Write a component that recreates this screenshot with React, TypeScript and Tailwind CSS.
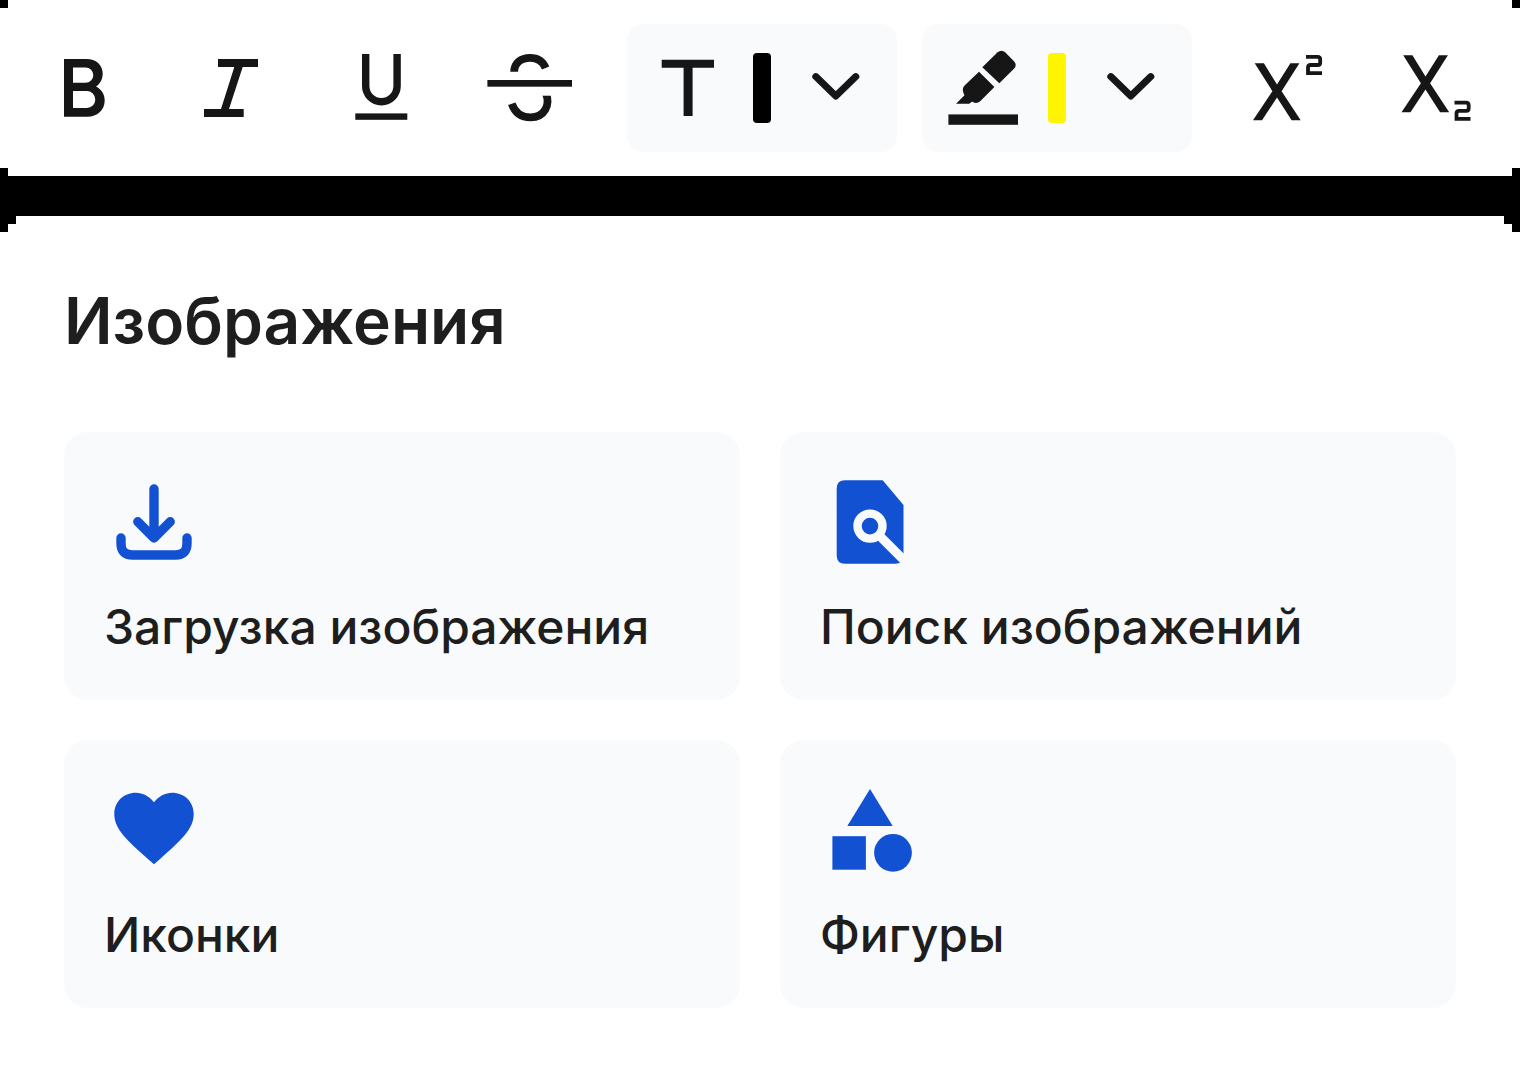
import type { ReactNode } from 'react';

function ToolIcon({ children }: { children: ReactNode }) {
  return (
    <svg viewBox="0 0 128 128" className="size-32" fill="currentColor" aria-hidden="true">
      {children}
    </svg>
  );
}

function ToolButton({ label, children }: { label: string; children: ReactNode }) {
  return (
    <button type="button" aria-label={label} className="size-32 shrink-0 rounded-2xl">
      <ToolIcon>{children}</ToolIcon>
    </button>
  );
}

function ColorButton({ label, swatch, children }: { label: string; swatch: string; children: ReactNode }) {
  return (
    <button type="button" aria-label={label} className="flex h-32 shrink-0 items-center rounded-2xl bg-[#f8fafc]">
      <svg viewBox="0 0 126 128" className="h-32 w-[126px]" fill="currentColor" aria-hidden="true">
        {children}
      </svg>
      <span className={`h-[70px] w-[18px] rounded-[4px] ${swatch}`} />
      <svg viewBox="0 0 126 128" className="h-32 w-[126px]" fill="none" stroke="currentColor" strokeWidth="7" strokeLinecap="round" strokeLinejoin="round" aria-hidden="true">
        <path d="M44.8 52.6 64.8 72 84.8 52.6" />
      </svg>
    </button>
  );
}

function SmallTwo() {
  return (
    <path
      d="M82 32.9H93.6Q96.2 32.9 96.2 35.5V38.4Q96.2 41 93.6 41H86.6Q84 41 84 43.6V49.1H98"
      fill="none"
      stroke="currentColor"
      strokeWidth="3.8"
    />
  );
}

function Cross() {
  return <path d="M30.7 39.3H39.9L53 60.5 66.4 39.3H75.4L57.6 67.2 76.7 96.3H67.6L53 73.5 38 96.3H29L48.4 67.2Z" />;
}

function CardButton({ label, children }: { label: string; children: ReactNode }) {
  return (
    <button type="button" className="flex flex-col items-start gap-[22px] rounded-3xl bg-[#f8fafc] p-10 text-left">
      <svg viewBox="0 0 100 100" className="size-[100px] text-[#1351d3]" fill="currentColor" aria-hidden="true">
        {children}
      </svg>
      <span className="text-5xl leading-[66px] font-medium">{label}</span>
    </button>
  );
}

export default function App() {
  return (
    <div className="flex min-h-screen flex-col gap-10 bg-black font-['Inter',sans-serif] text-[#1e1e1e]">
      <header
        role="toolbar"
        aria-label="Форматирование"
        className="flex items-center justify-between bg-white px-5 py-6 text-[#161616] [clip-path:polygon(8px_0,calc(100%-8px)_0,calc(100%-8px)_8px,100%_8px,100%_calc(100%-8px),calc(100%-8px)_calc(100%-8px),calc(100%-8px)_100%,8px_100%,8px_calc(100%-8px),0_calc(100%-8px),0_8px,8px_8px)]"
      >
        <div className="flex gap-[21px]">
          <ToolButton label="Полужирный">
            <path
              fillRule="evenodd"
              d="M44 35H66.5C76 35 82.7 41 82.7 49.6C82.7 55.5 80 60 76 62.6C81.3 65.2 84.7 70.3 84.7 76.5C84.7 86.5 77 92.7 67.5 92.7H44ZM53 43.6V58.8H65.7A7.6 7.6 0 0 0 65.7 43.6ZM53 67V84H66.8A8.5 8.5 0 0 0 66.8 67Z"
            />
          </ToolButton>
          <ToolButton label="Курсив">
            <path d="M49 35H89V43H73.7L60 85H74.7V93H35V85H52L65.3 43H49Z" />
          </ToolButton>
          <ToolButton label="Подчёркнутый">
            <path d="M47.7 30V62A15.7 15.7 0 0 0 79.1 62V30" fill="none" stroke="currentColor" strokeWidth="7.4" />
            <rect x="37.3" y="89.4" width="52" height="6.4" />
          </ToolButton>
          <ToolButton label="Зачёркнутый">
            <path
              d="M47.2 47.7C47.2 39 54 33.8 63 33.8C70.5 33.8 76 37.2 78.6 44M79 69.5C83.5 81 77.5 93.4 63.6 93.4C54.5 93.4 47.8 88.5 44.8 79.7"
              fill="none"
              stroke="currentColor"
              strokeWidth="7.8"
            />
            <rect x="72" y="64" width="16" height="7.7" className="fill-white" />
            <rect x="20.4" y="56" width="84.6" height="6.7" />
          </ToolButton>
        </div>
        <div className="flex gap-[25px]">
          <ColorButton label="Цвет текста" swatch="bg-black">
            <path d="M34.7 35.7H87V43.7H65.6V92H56.6V43.7H34.7Z" />
          </ColorButton>
          <ColorButton label="Цвет выделения" swatch="bg-[#fff500]">
            <path d="M60.3 43.3 75.6 28.2Q79.6 25 83.4 28.4L92.2 37.4Q95.2 41 92.2 44.6L77.3 59.3Z" />
            <path d="M57 47.7 72.4 63 58.2 77.2Q54.4 80.6 50.6 77.7L49.4 77.9 47.3 79.7H34L42.5 71.2C40.4 67.4 40.2 64.2 42.6 61.6Z" />
            <rect x="26.4" y="90.4" width="69.6" height="10.4" />
          </ColorButton>
        </div>
        <div className="flex gap-[21px]">
          <ToolButton label="Надстрочный">
            <g transform="translate(1 0)">
              <Cross />
              <SmallTwo />
            </g>
          </ToolButton>
          <ToolButton label="Подстрочный">
            <g transform="translate(0.5 -8)">
              <Cross />
            </g>
            <g transform="translate(0.5 45.8)">
              <SmallTwo />
            </g>
          </ToolButton>
        </div>
      </header>

      <main className="flex grow flex-col gap-[70px] bg-white p-16 [clip-path:polygon(16px_0,calc(100%-16px)_0,calc(100%-16px)_8px,calc(100%-8px)_8px,calc(100%-8px)_16px,100%_16px,100%_100%,0_100%,0_16px,8px_16px,8px_8px,16px_8px)]">
        <h1 className="text-[64px] leading-[82px] font-semibold">Изображения</h1>
        <div className="grid grid-cols-2 gap-10">
          <CardButton label="Загрузка изображения">
            <path
              d="M50 17V65M33.8 49.8 50 66 66.2 49.8M17 66V71.5Q17 83 28.5 83H71.5Q83 83 83 71.5V66"
              fill="none"
              stroke="currentColor"
              strokeWidth="9.4"
              strokeLinecap="round"
              strokeLinejoin="round"
            />
          </CardButton>
          <CardButton label="Поиск изображений">
            <path d="M25 8.2H62.7L83.5 33V83.5Q83.5 91.7 75.2 91.7H25Q16.7 91.7 16.7 83.4V16.5Q16.7 8.2 25 8.2Z" />
            <g fill="none" stroke="#f8fafc">
              <circle cx="50" cy="54.1" r="12.5" strokeWidth="8.4" />
              <path d="M60 64.2 92 96.2" strokeWidth="9" />
            </g>
          </CardButton>
          <CardButton label="Иконки">
            <path d="M50 84.3 44.2 79.2C23.5 60.5 10.3 49.5 10.3 34C10.3 22 19.5 12.8 31.8 12.8C38.8 12.8 45.5 16.5 50 22.3C54.5 16.5 61.2 12.8 68.2 12.8C80.5 12.8 89.7 22 89.7 34C89.7 49.5 76.5 60.5 55.8 79.2Z" />
          </CardButton>
          <CardButton label="Фигуры">
            <path d="M50 9 72.7 46H27.3Z" />
            <rect x="12.4" y="56.2" width="33.5" height="33.5" />
            <circle cx="73" cy="72.8" r="18.9" />
          </CardButton>
        </div>
      </main>
    </div>
  );
}
